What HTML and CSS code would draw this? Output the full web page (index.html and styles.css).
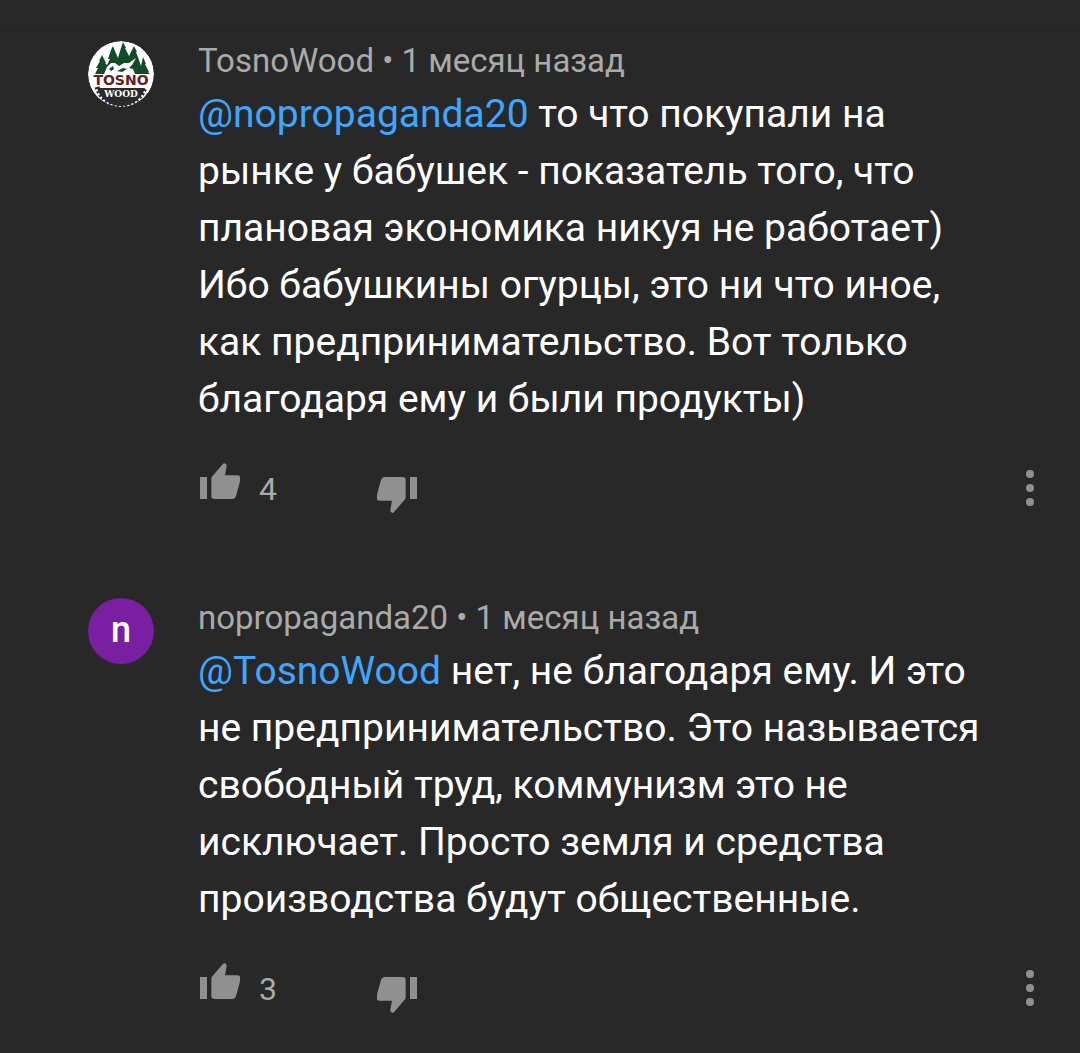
FILE: index.html
```html
<!DOCTYPE html>
<html lang="ru">
<head>
    <meta charset="UTF-8">
    <meta name="viewport" content="width=device-width, initial-scale=1.0">
    <title>Ответы</title>
    <link rel="stylesheet" href="styles.css">
</head>
<body>
    <header class="top-bar"></header>

    <main class="comments">
        <article class="comment">
            <svg class="avatar" viewBox="0 0 66 66" role="img" aria-label="TosnoWood">
                <circle cx="33" cy="33" r="33" fill="#fff"/>
                <!-- forest -->
                <path d="M7 33l3-6-2 0 4-7-1 0 3-6 4 8-1 0 2 2 3-6-2 0 3-9 2-4 2 5 3 7 3-10 2-6 3 6-1 0 4 8 3-6 2-4 3 6-1 0 3 8 2 6 2-9 3 7-1 0 4 8-1 0 2 2z" fill="#134a2b"/>
                <!-- sawyer and log -->
                <path d="M16 33l3-7 4-4 4 0 4 3 5-3 5 0 7-5-4 7-3 3 4 1 2 5z" fill="#fff"/>
                <path d="M21 28l4-3 1 3-3 2zM29 30l6-3 4 1-5 3z" fill="#134a2b"/>
                <text x="33" y="44" class="logo-name">TOSNO</text>
                <!-- saw blade -->
                <path d="M9 47h48a25 25 0 0 1-48 0z" fill="#2b2b2b"/>
                <path d="M9 46a25 25 0 0 0 48 0" fill="none" stroke="#2b2b2b" stroke-width="5" stroke-dasharray="2 2"/>
                <text x="33" y="56" class="logo-sub">WOOD</text>
            </svg>
            <div class="comment-body">
                <div class="meta">TosnoWood • 1 месяц назад</div>
                <p class="text"><a class="mention" href="#">@nopropaganda20</a> то что покупали на рынке у бабушек - показатель того, что плановая экономика никуя не работает) Ибо бабушкины огурцы, это ни что иное, как предпринимательство. Вот только благодаря ему и были продукты)</p>
                <div class="actions">
                    <button class="action like" type="button" aria-label="Нравится">
                        <svg class="thumb" viewBox="0 0 120 108"><path d="M0 42h21v66H0zM34 47q0-4 3-7L68 4Q72-2 77 2q4 3 3 8l-5 27h36q11 0 10 10-1 10-4 20L108 99q-3 9-12 9H43q-9 0-9-9z"/></svg>
                        <span class="count">4</span>
                    </button>
                    <button class="action dislike" type="button" aria-label="Не нравится">
                        <svg class="thumb" viewBox="0 0 120 108"><path transform="rotate(180 60 54)" d="M0 42h21v66H0zM34 47q0-4 3-7L68 4Q72-2 77 2q4 3 3 8l-5 27h36q11 0 10 10-1 10-4 20L108 99q-3 9-12 9H43q-9 0-9-9z"/></svg>
                    </button>
                    <button class="action more" type="button" aria-label="Ещё">
                        <svg class="dots" viewBox="0 0 8 36"><circle cx="4" cy="4" r="4"/><circle cx="4" cy="18" r="4"/><circle cx="4" cy="32" r="4"/></svg>
                    </button>
                </div>
            </div>
        </article>

        <article class="comment">
            <div class="avatar letter">n</div>
            <div class="comment-body">
                <div class="meta">nopropaganda20 • 1 месяц назад</div>
                <p class="text"><a class="mention" href="#">@TosnoWood</a> нет, не благодаря ему. И это не предпринимательство. Это называется свободный труд, коммунизм это не исключает. Просто земля и средства производства будут общественные.</p>
                <div class="actions">
                    <button class="action like" type="button" aria-label="Нравится">
                        <svg class="thumb" viewBox="0 0 120 108"><path d="M0 42h21v66H0zM34 47q0-4 3-7L68 4Q72-2 77 2q4 3 3 8l-5 27h36q11 0 10 10-1 10-4 20L108 99q-3 9-12 9H43q-9 0-9-9z"/></svg>
                        <span class="count">3</span>
                    </button>
                    <button class="action dislike" type="button" aria-label="Не нравится">
                        <svg class="thumb" viewBox="0 0 120 108"><path transform="rotate(180 60 54)" d="M0 42h21v66H0zM34 47q0-4 3-7L68 4Q72-2 77 2q4 3 3 8l-5 27h36q11 0 10 10-1 10-4 20L108 99q-3 9-12 9H43q-9 0-9-9z"/></svg>
                    </button>
                    <button class="action more" type="button" aria-label="Ещё">
                        <svg class="dots" viewBox="0 0 8 36"><circle cx="4" cy="4" r="4"/><circle cx="4" cy="18" r="4"/><circle cx="4" cy="32" r="4"/></svg>
                    </button>
                </div>
            </div>
        </article>
    </main>
</body>
</html>
```
FILE: styles.css
```css
* {
    box-sizing: border-box;
}

body {
    margin: 0;
    background: #282828;
    color: #fff;
    font-family: Roboto, sans-serif;
}

.top-bar {
    height: 31px;
    border-bottom: 1px solid #232323;
}

.comment {
    display: flex;
    gap: 44px;
    padding: 10px 40px 75px 88px;
}

.avatar {
    flex: none;
    width: 66px;
    height: 66px;
    border-radius: 50%;
}

.letter {
    background: #7b1fa2;
    font-size: 36px;
    font-weight: 500;
    line-height: 64px;
    text-align: center;
}

.logo-name {
    font: bold 14px "DejaVu Sans", sans-serif;
    fill: #64211e;
    text-anchor: middle;
}

.logo-sub {
    font: bold 9px "DejaVu Serif", serif;
    fill: #fff;
    text-anchor: middle;
}

.comment-body {
    flex: 1;
    min-width: 0;
}

.meta {
    color: #aaa;
    font-size: 33px;
    line-height: 40px;
}

.text {
    margin: 5px 0 0;
    padding-right: 40px;
    font-size: 39px;
    line-height: 57px;
}

.mention {
    color: #3ea6ff;
    text-decoration: none;
}

.actions {
    display: flex;
    height: 50px;
    margin-top: 35px;
}

.action {
    display: flex;
    align-items: flex-start;
    padding: 0;
    border: 0;
    background: none;
    color: #aaa;
    font: inherit;
    cursor: pointer;
}

.like {
    width: 179px;
    padding-left: 2px;
    gap: 19px;
}

.dislike {
    align-items: flex-end;
}

.thumb {
    width: 40px;
    height: 36px;
    fill: #909090;
}

.count {
    font-size: 32px;
    line-height: 52px;
}

.more {
    align-items: center;
    margin-left: auto;
    padding: 0 6px;
}

.dots {
    width: 8px;
    height: 36px;
    fill: #909090;
}
```
